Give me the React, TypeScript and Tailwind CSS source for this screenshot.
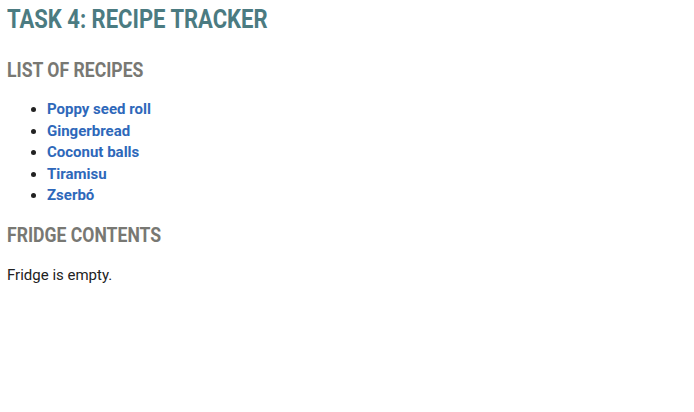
import React from 'react';

const recipes = ['Poppy seed roll', 'Gingerbread', 'Coconut balls', 'Tiramisu', 'Zserbó'];

const App: React.FC = () => {
  return (
    <div className="min-h-screen bg-white px-[7px] pt-[5px] font-['Roboto',sans-serif] text-[15px] text-[#222]">
      <h1 className="origin-left scale-x-[0.86] text-[25.6px] font-bold uppercase leading-[29px] text-[#4b7b81]">
        Task 4: Recipe Tracker
      </h1>

      <h2 className="mt-[24px] origin-left scale-x-[0.88] text-[20px] font-bold uppercase leading-[24px] text-[#787873]">
        List of recipes
      </h2>
      <ul className="mt-[17px] list-disc pl-[40px]">
        {recipes.map((r) => (
          <li key={r} className="leading-[21.5px]">
            <a href="#" className="font-bold text-[#2e68ba]">{r}</a>
          </li>
        ))}
      </ul>

      <h2 className="mt-[16px] origin-left scale-x-[0.88] text-[20px] font-bold uppercase leading-[24px] text-[#787873]">
        Fridge contents
      </h2>
      <p className="mt-[18px] leading-[20px]">Fridge is empty.</p>
    </div>
  );
};

export default App;
